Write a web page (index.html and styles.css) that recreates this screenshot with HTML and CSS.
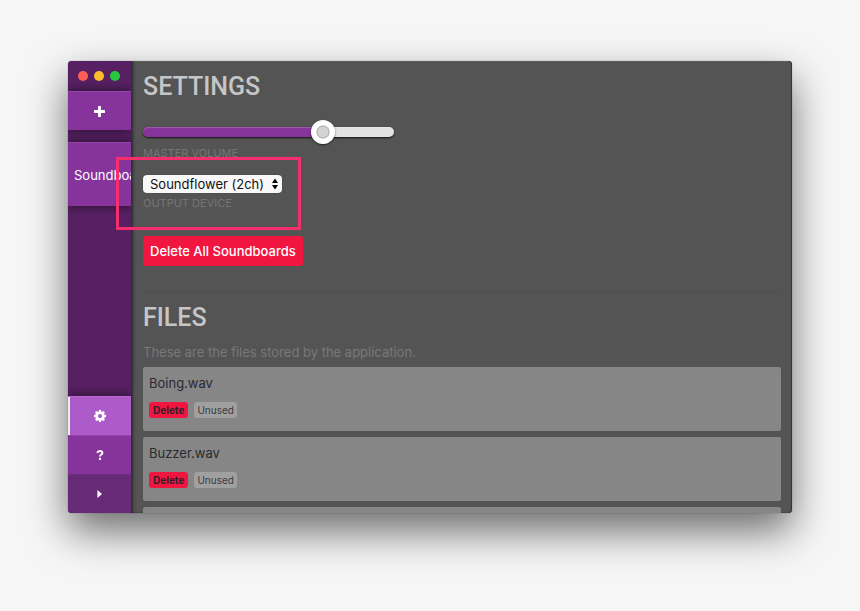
FILE: index.html
```html
<!DOCTYPE html>
<html lang="en">
<head>
<meta charset="utf-8">
<meta name="viewport" content="width=device-width, initial-scale=1">
<title>Settings</title>
<link rel="stylesheet" href="styles.css">
</head>
<body>
<div class="window">
  <nav class="sidebar">
    <div class="titlebar">
      <span class="light light-close"></span>
      <span class="light light-minimise"></span>
      <span class="light light-zoom"></span>
    </div>
    <button class="nav-button raised" type="button" aria-label="Add soundboard">
      <svg width="11" height="11" viewBox="0 0 10 10"><path d="M3.7 0.5Q3.7 0 4.2 0H5.8Q6.3 0 6.3 0.5V3.7H9.5Q10 3.7 10 4.2V5.8Q10 6.3 9.5 6.3H6.3V9.5Q6.3 10 5.8 10H4.2Q3.7 10 3.7 9.5V6.3H0.5Q0 6.3 0 5.8V4.2Q0 3.7 0.5 3.7H3.7Z"/></svg>
    </button>
    <button class="board raised" type="button">Soundboard</button>
    <div class="nav-bottom">
      <button class="nav-button active" type="button" aria-label="Settings">
        <svg width="12" height="12" viewBox="0 0 1536 1536"><path d="M1024 768q0-106-75-181t-181-75-181 75-75 181 75 181 181 75 181-75 75-181zm512-109v222q0 12-8 23t-20 13l-185 28q-19 54-39 91 35 50 107 138 10 12 10 25t-9 23q-27 37-99 108t-94 71q-12 0-26-9l-138-108q-44 23-91 38-16 136-29 186-7 28-36 28H657q-14 0-24.500-8.500T621 1506l-28-184q-49-16-90-37l-141 107q-10 9-25 9-14 0-25-11-126-114-165-168-7-10-7-23 0-12 8-23 15-21 51-66.500t54-70.500q-27-50-41-99L29 913q-13-2-21-12.500T0 877V655q0-12 8-23t19-13l186-28q14-46 39-92-40-57-107-138-10-12-10-24 0-10 9-23 26-36 98.500-107.500T337 135q13 0 26 10l138 107q44-23 91-38 16-136 29-186 7-28 36-28h222q14 0 24.500 8.500T915 30l28 184q49 16 90 37l142-107q9-9 24-9 13 0 25 10 129 119 165 170 7 8 7 22 0 12-8 23-15 21-51 66.500t-54 70.500q26 50 41 98l183 28q13 2 21 12.500t8 23.500z"/></svg>
      </button>
      <button class="nav-button" type="button" aria-label="Help">
        <svg width="8" height="10" viewBox="0 0 8 10"><path class="stroke" d="M1.200 2.900Q1.800 1 3.900 1Q6.400 1 6.400 2.900Q6.400 4 5.200 4.600Q4 5.200 4 6.500"/><path d="M2.900 7.800H5V9.900H2.900Z"/></svg>
      </button>
      <button class="nav-button dark" type="button" aria-label="Expand sidebar">
        <svg width="5" height="8" viewBox="0 0 5 8"><path d="M0.400 0L5 4L0.400 8Z"/></svg>
      </button>
    </div>
  </nav>
  <main class="content">
    <h1 class="heading">SETTINGS</h1>
    <div class="field">
      <input class="volume" id="volume" type="range" min="0" max="100" value="74">
      <label class="caption volume-caption" for="volume">MASTER VOLUME</label>
    </div>
    <div class="field device">
      <div class="select-wrap">
        <select class="select" id="device"><option>Soundflower (2ch)</option></select>
        <svg class="select-arrows" width="6" height="12" viewBox="0 0 6 12"><path d="M0 5L3 0.500L6 5ZM0 7L3 11.500L6 7Z"/></svg>
      </div>
      <label class="caption" for="device">OUTPUT DEVICE</label>
    </div>
    <button class="delete-all" type="button">Delete All Soundboards</button>
    <hr class="divider">
    <h2 class="heading">FILES</h2>
    <p class="intro">These are the files stored by the application.</p>
    <ul class="files">
      <li class="file">
        <div class="file-name">Boing.wav</div>
        <div class="tags"><button class="tag tag-delete" type="button">Delete</button><span class="tag">Unused</span></div>
      </li>
      <li class="file">
        <div class="file-name">Buzzer.wav</div>
        <div class="tags"><button class="tag tag-delete" type="button">Delete</button><span class="tag">Unused</span></div>
      </li>
      <li class="file"></li>
    </ul>
  </main>
  <div class="callout"></div>
</div>
</body>
</html>
```
FILE: styles.css
```css
* {
  box-sizing: border-box;
}

body {
  margin: 0;
  height: 100vh;
  padding: 61px 68px 98px;
  display: flex;
  background: #f6f6f6;
  font-family: Inter, "Liberation Sans", sans-serif;
  font-size: 13px;
  line-height: 16px;
}

button {
  margin: 0;
  border: 0;
  font: inherit;
}

.window {
  position: relative;
  flex: 1;
  min-width: 0;
  display: flex;
  border-radius: 4px;
  background: #545454;
  box-shadow: 0 0 1px rgba(0, 0, 0, 0.6), 0 18px 40px rgba(0, 0, 0, 0.56);
}

.sidebar {
  flex: none;
  width: 63px;
  display: flex;
  flex-direction: column;
  overflow: hidden;
  border-radius: 4px 0 0 4px;
  background: #572063;
}

.titlebar {
  flex: none;
  height: 30px;
  padding-right: 2px;
  display: flex;
  align-items: center;
  justify-content: center;
  gap: 6px;
}

.light {
  width: 10px;
  height: 10px;
  border-radius: 50%;
}

.light-close { background: #ff5f57; }
.light-minimise { background: #ffbd2e; }
.light-zoom { background: #28c940; }

.nav-button {
  flex: none;
  height: 39px;
  padding: 0;
  display: flex;
  align-items: center;
  justify-content: center;
  background: #86349c;
  border-top: 1px solid #9344a8;
}

.nav-button svg {
  fill: #fff;
}

.nav-button .stroke {
  fill: none;
  stroke: #fff;
  stroke-width: 2;
}

.raised {
  box-shadow: 0 0 10px rgba(0, 0, 0, 0.6);
}

.board {
  flex: none;
  height: 64px;
  margin-top: 12px;
  padding: 0 6px;
  overflow: hidden;
  background: #86349c;
  border-top: 1px solid #9344a8;
  color: #fff;
  text-align: left;
  white-space: nowrap;
}

.nav-bottom {
  margin-top: auto;
  display: flex;
  flex-direction: column;
  box-shadow: 0 0 10px rgba(0, 0, 0, 0.6);
}

.nav-button.active {
  background: #ad5bc8;
  border-top-color: #b76bd0;
  box-shadow: inset 2px 0 #eee;
}

.nav-button.dark {
  background: #662a77;
  border-top-color: #6c2f7d;
}

.content {
  flex: 1;
  min-width: 0;
  padding: 10px 11px 0 12px;
  overflow: hidden;
  border-radius: 0 4px 4px 0;
  box-shadow: inset 3px 0 3px -1px rgba(0, 0, 0, 0.5), inset -1px 0 1px #333, inset 0 1px #6a6a6a;
}

.heading {
  margin: 0;
  color: #c6c6c6;
  font-family: Roboto, Inter, sans-serif;
  font-size: 25px;
  font-weight: 500;
  line-height: 32px;
}

.field {
  display: flex;
  flex-direction: column;
  align-items: flex-start;
}

.volume {
  appearance: none;
  width: 251px;
  max-width: 100%;
  height: 24px;
  margin: 17px 0 0;
  background: transparent;
}

.volume::-webkit-slider-runnable-track {
  height: 10px;
  border-radius: 5px;
  background: linear-gradient(90deg, #86349c 72%, #e2e2e2 72%);
  box-shadow: 0 1px 2px rgba(0, 0, 0, 0.8), inset 0 1px 1px rgba(255, 255, 255, 0.2);
}

.volume::-webkit-slider-thumb {
  appearance: none;
  width: 24px;
  height: 24px;
  margin-top: -7px;
  border-radius: 50%;
  background: radial-gradient(circle, #d4d4d4 5px, #aaa 6px, #fff 7px);
  box-shadow: 0 1px 2px rgba(0, 0, 0, 0.6);
}

.caption {
  color: #757575;
  font-size: 11px;
  line-height: 16px;
}

.volume-caption {
  margin-top: 1px;
}

.device {
  margin-top: 14px;
}

.select-wrap {
  position: relative;
  margin-bottom: 2px;
}

.select {
  display: block;
  appearance: none;
  width: 139px;
  height: 18px;
  margin: 0;
  padding: 0 12px 0 7px;
  border: 0;
  border-radius: 4px;
  background: #f8f8f8;
  color: #111;
  font: inherit;
  box-shadow: 0 0 1px rgba(0, 0, 0, 0.6);
}

.select-arrows {
  position: absolute;
  top: 3px;
  right: 4px;
  pointer-events: none;
}

.delete-all {
  display: block;
  height: 30px;
  margin-top: 25px;
  padding: 0 7px;
  border-radius: 3px;
  background: #f0163f;
  color: #fff;
  font-weight: 500;
}

.divider {
  height: 1px;
  margin: 25px 0 10px;
  border: 0;
  background: #4e4e4e;
}

.intro {
  margin: 10px 0 7px;
  color: #787878;
}

.files {
  margin: 0;
  padding: 0;
  display: flex;
  flex-direction: column;
  gap: 6px;
  list-style: none;
}

.file {
  height: 64px;
  padding: 8px 6px;
  border-radius: 3px;
  background: #868686;
  box-shadow: inset 0 0 1px #9a9a9a;
}

.file-name {
  color: #282b30;
}

.tags {
  display: flex;
  gap: 6px;
  margin-top: 11px;
}

.tag {
  height: 16px;
  padding: 0 3px;
  border-radius: 3px;
  background: #a0a0a0;
  color: #383b40;
  font-size: 10px;
  line-height: 16px;
}

.tag-delete {
  padding: 0 4px;
  background: #f0163f;
  color: #30202a;
  font-weight: 700;
}

.callout {
  position: absolute;
  top: 96px;
  left: 48px;
  width: 185px;
  height: 73px;
  border: 3px solid #f52e6d;
  pointer-events: none;
}
```
